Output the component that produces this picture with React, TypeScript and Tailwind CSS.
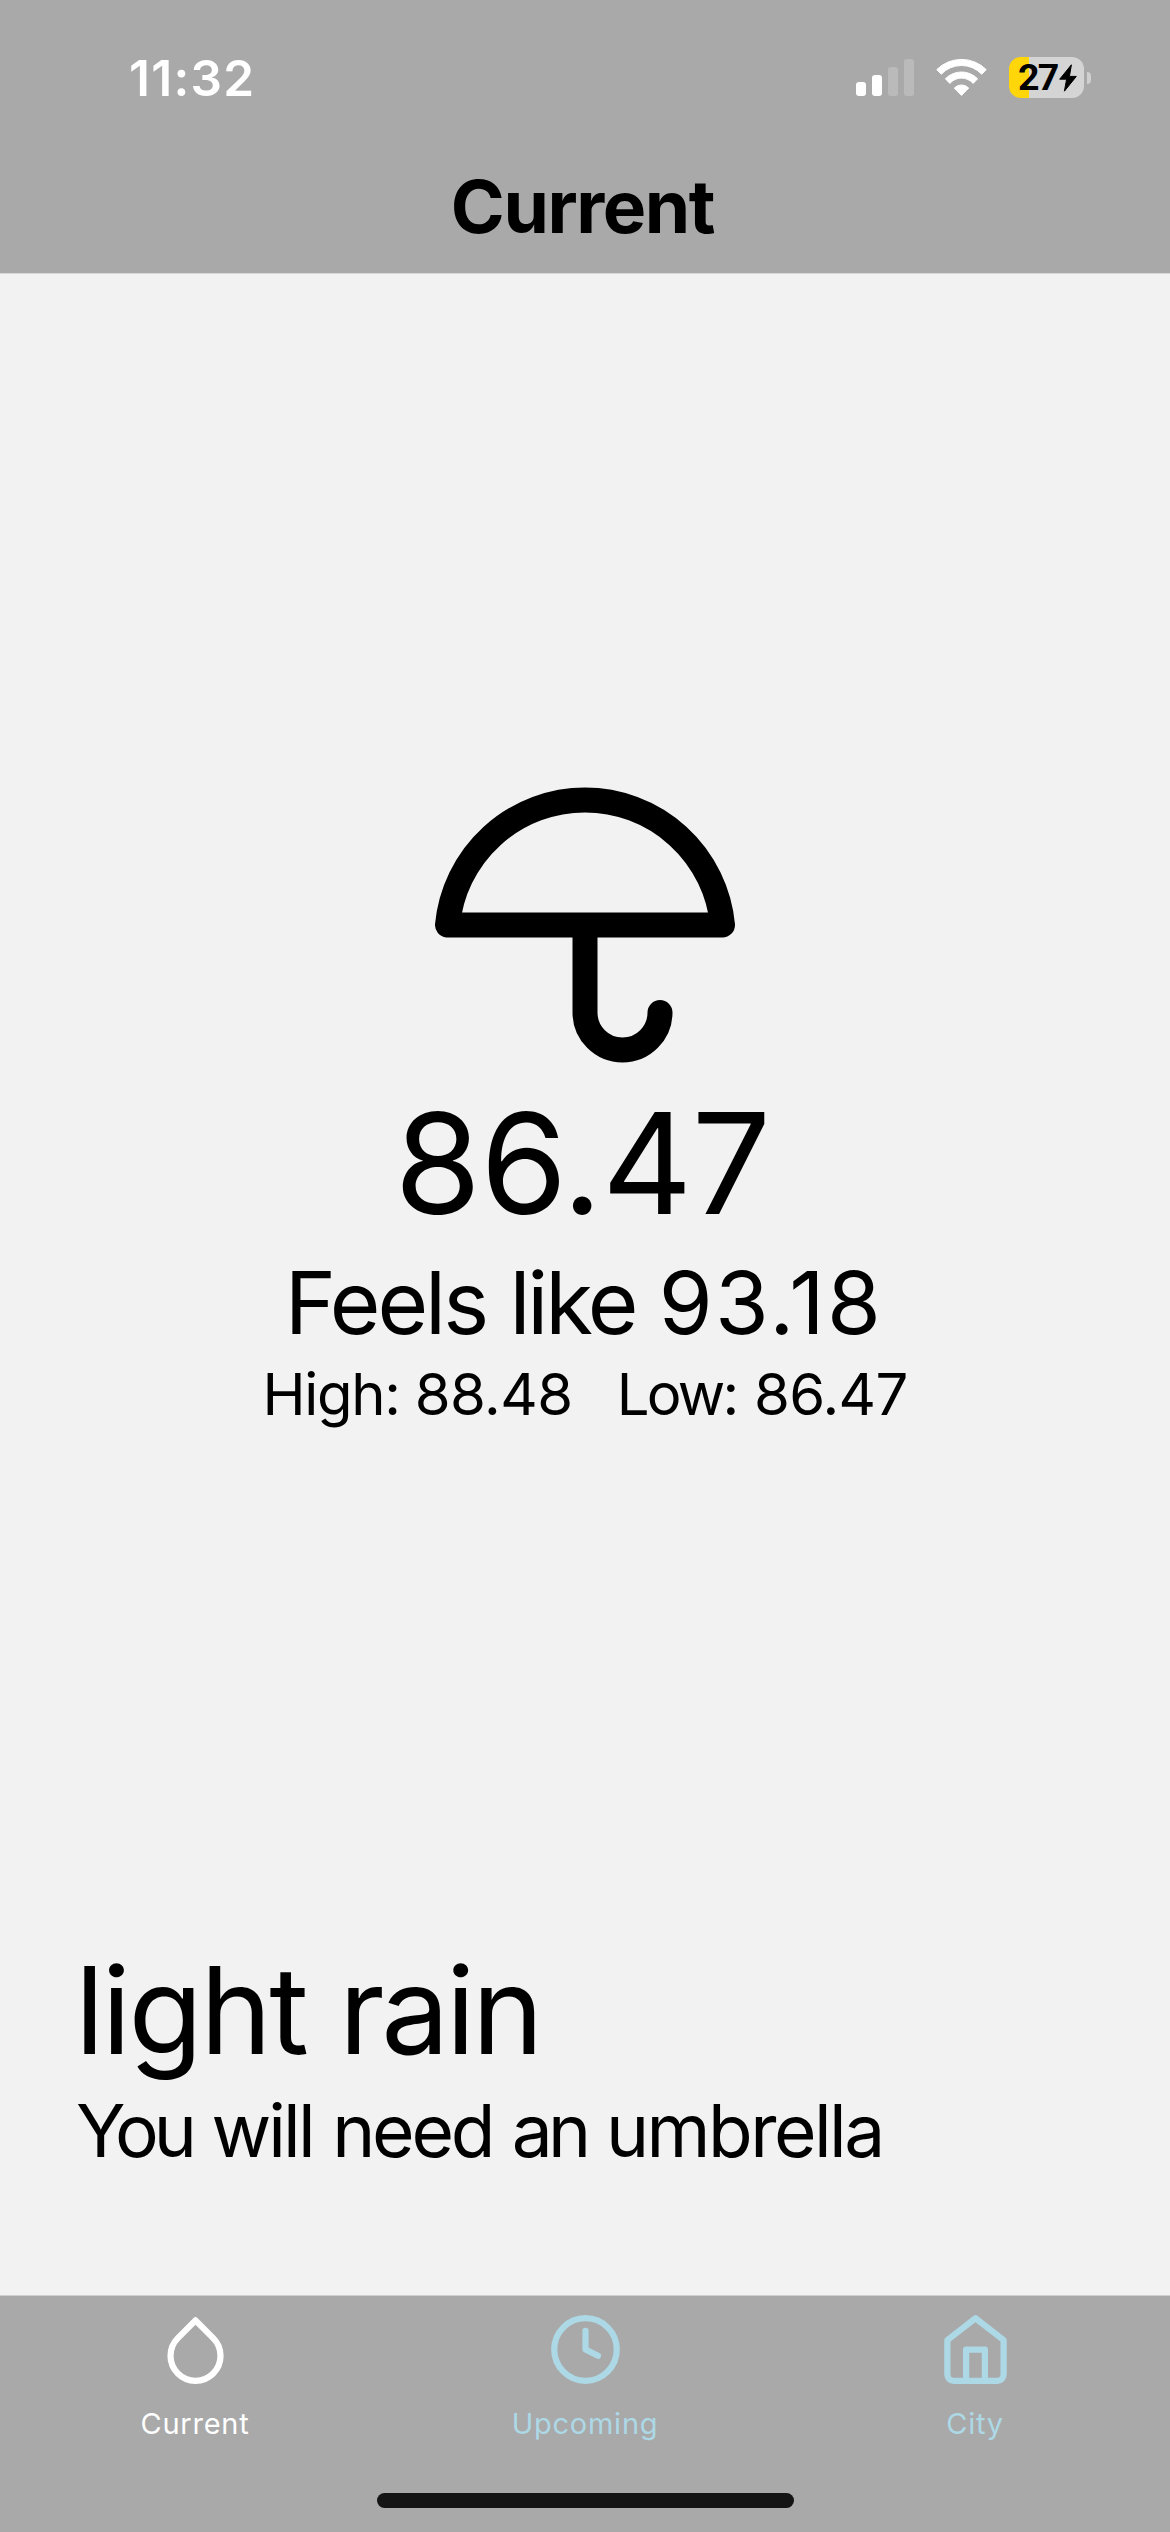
import type { IconType } from 'react-icons';
import { FiClock, FiDroplet, FiHome, FiUmbrella } from 'react-icons/fi';

function SignalIcon() {
  return (
    <svg width="58" height="37" viewBox="0 0 58 37">
      <rect x="0" y="23" width="10" height="14" rx="3" fill="#fff" />
      <rect x="16" y="16" width="10" height="21" rx="3" fill="#fff" />
      <rect x="32" y="8" width="10" height="29" rx="3" fill="#bababa" />
      <rect x="48" y="0" width="10" height="37" rx="3" fill="#bababa" />
    </svg>
  );
}

function WifiIcon() {
  return (
    <svg width="51" height="37" viewBox="0 0 51 37" fill="#fff" stroke="#fff" strokeWidth="1" strokeLinejoin="round">
      <path d="M0.8 10.6A35 35 0 0 1 50.2 10.6L45.8 15.2A28 28 0 0 0 5.2 15.2Z" />
      <path d="M9.4 19.8A22.4 22.4 0 0 1 41.6 19.8L37.2 24.4A15.6 15.6 0 0 0 13.8 24.4Z" />
      <path d="M18.3 29A10 10 0 0 1 32.7 29L25.5 36.4Z" />
    </svg>
  );
}

function Battery() {
  return (
    <div className="flex items-center gap-[3px]">
      <div className="flex h-[41px] w-[75px] items-center rounded-[12px] bg-[linear-gradient(to_right,#ffd60a_20px,#d4d4d4_20px)] pl-[9px]">
        <span className="w-[41px] font-['Roboto',sans-serif] text-[37.5px] leading-[41px] font-bold tracking-[-1.7px] text-black">
          27
        </span>
        <svg width="18" height="28" viewBox="0 0 18 28" fill="#000" stroke="#000" strokeWidth="1" strokeLinejoin="round">
          <path d="M12.4 0.8L0.7 15.2H7.6L5.4 27.2L17.3 12.4H10.4Z" />
        </svg>
      </div>
      <div className="h-3 w-1 rounded-r-full bg-[#d0d0d0]" />
    </div>
  );
}

function Tab({ icon: Icon, label, active = false }: { icon: IconType; label: string; active?: boolean }) {
  return (
    <div className={`flex flex-1 flex-col items-center gap-[18px] pt-4 ${active ? 'text-white' : 'text-[#add8e6]'}`}>
      <Icon size={75} />
      <span className="text-[29px] leading-[37px] tracking-[0.75px]">{label}</span>
    </div>
  );
}

export default function App() {
  return (
    <div className="flex h-[2532px] w-[1170px] flex-col overflow-hidden bg-[#f2f2f2] font-['Inter',sans-serif] text-black">
      <header className="h-[274px] shrink-0 border-b border-[#d8d8d8] bg-[#a9a9a9]">
        <div className="flex h-[156px] items-center justify-between pr-[79px] pl-[129px]">
          <span className="text-[49.5px] leading-[60px] font-semibold tracking-[1.27px] text-white">11:32</span>
          <div className="mb-px flex items-center gap-[22px]">
            <SignalIcon />
            <WifiIcon />
            <Battery />
          </div>
        </div>
        <h1 className="pr-[5px] text-center text-[73px] leading-[101px] font-bold tracking-[-1.42px]">Current</h1>
      </header>

      <main className="flex flex-1 flex-col justify-between pt-[501px] pb-[119px]">
        <section className="flex flex-col items-center">
          <FiUmbrella size={300} />
          <p className="mt-0.5 pr-[5px] text-[140px] leading-[172px] tracking-[-0.5px]">86.47</p>
          <p className="pr-0.5 text-[87px] leading-[107px] [word-spacing:-1.1px]">
            <span className="tracking-[-3.04px]">Feels</span> <span className="tracking-[-3.16px]">like</span>{' '}
            <span className="tracking-[2.37px]">93.18</span>
          </p>
          <div className="flex gap-11 text-[58px] leading-[76px]">
            <p className="[word-spacing:-1.2px]">
              <span className="tracking-[-1.32px]">High:</span> <span className="tracking-[-0.51px]">88.48</span>
            </p>
            <p className="[word-spacing:1.1px]">
              <span className="tracking-[-2.72px]">Low:</span> <span className="tracking-[-0.64px]">86.47</span>
            </p>
          </div>
        </section>
        <section className="pl-[75px]">
          <h2 className="text-[121px] leading-[150px] [word-spacing:-1.2px]">
            <span className="tracking-[-2.55px]">light</span> <span className="tracking-[-3.31px]">rain</span>
          </h2>
          <p className="pl-px text-[73px] leading-[91px] [word-spacing:-1.1px]">
            <span className="tracking-[-4.96px]">You</span> <span className="tracking-[-2.89px]">will</span>{' '}
            <span className="tracking-[-3.2px]">need</span> <span className="tracking-[-4.65px]">an</span>{' '}
            <span className="tracking-[-2.54px]">umbrella</span>
          </p>
        </section>
      </main>

      <footer className="flex h-[237px] shrink-0 flex-col justify-between border-t border-[#d0d0d0] bg-[#a9a9a9] pb-6">
        <nav className="flex">
          <Tab icon={FiDroplet} label="Current" active />
          <Tab icon={FiClock} label="Upcoming" />
          <Tab icon={FiHome} label="City" />
        </nav>
        <div className="ml-[377px] h-[15px] w-[417px] rounded-full bg-[#141414]" />
      </footer>
    </div>
  );
}
